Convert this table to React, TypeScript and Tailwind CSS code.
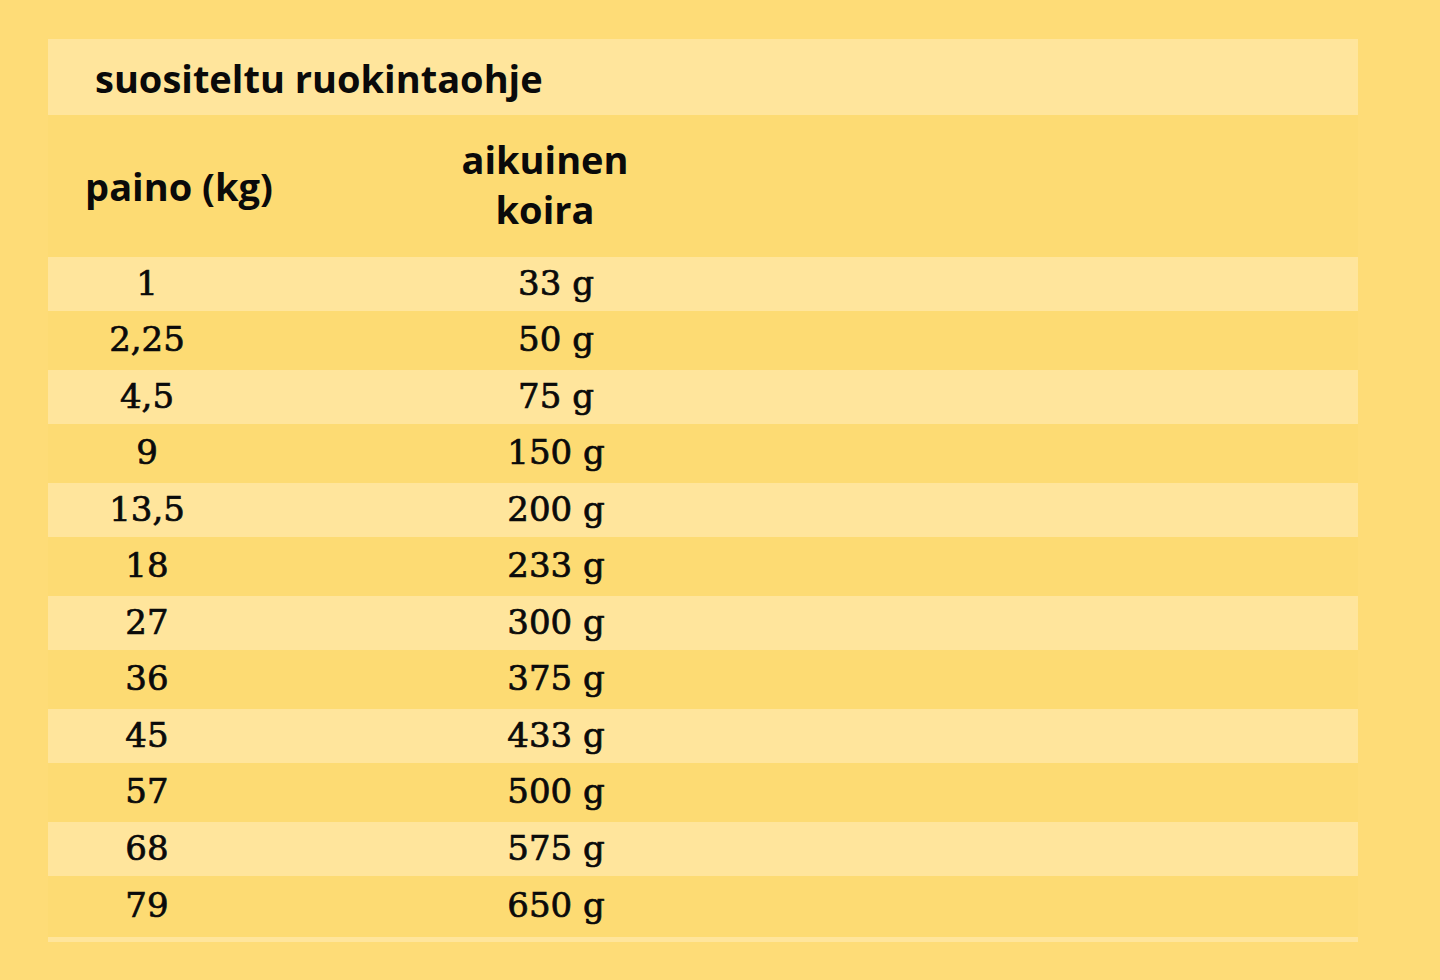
import React from "react";

const rows: [string, string][] = [
  ["1", "33 g"],
  ["2,25", "50 g"],
  ["4,5", "75 g"],
  ["9", "150 g"],
  ["13,5", "200 g"],
  ["18", "233 g"],
  ["27", "300 g"],
  ["36", "375 g"],
  ["45", "433 g"],
  ["57", "500 g"],
  ["68", "575 g"],
  ["79", "650 g"],
];

const sans = { fontFamily: '"Open Sans", "Noto Sans", sans-serif' };
const serif = { fontFamily: '"DejaVu Serif", "Liberation Serif", serif' };

export default function App() {
  return (
    <div className="w-[1440px] h-[980px] bg-[#FEDC77] pl-[48px] pt-[39px] overflow-hidden">
      <div className="w-[1310px] flex flex-col">
        <div className="h-[76px] bg-[#FFE59C] flex items-center pl-[47px] pt-[2px]">
          <span className="text-[38px] font-bold text-[#0a0a0a] leading-none" style={sans}>
            suositeltu ruokintaohje
          </span>
        </div>
        <div className="h-[142px] bg-[#FDDB73] flex items-center text-[#0a0a0a] font-bold text-[38px]" style={sans}>
          <div className="w-[262px] text-center leading-none">paino (kg)</div>
          <div className="w-[470px] text-center leading-[50px] mb-[5px]">
            aikuinen
            <br />
            koira
          </div>
        </div>
        {rows.map(([w, g], i) => {
          const light = i % 2 === 0;
          const last = i === rows.length - 1;
          return (
            <div
              key={w}
              className={`flex items-center text-[34px] text-[#0a0a0a] leading-none [-webkit-text-stroke:0.7px_#0a0a0a] pb-[3px] ${
                light ? "h-[54px] bg-[#FFE59C]" : last ? "h-[61px] bg-[#FDDB73]" : "h-[59px] bg-[#FDDB73]"
              }`}
              style={serif}
            >
              <div className="w-[198px] text-center">{w}</div>
              <div className="w-[620px] text-center">{g}</div>
            </div>
          );
        })}
        <div className="h-[5px] bg-[#FFE59C]" />
      </div>
    </div>
  );
}
